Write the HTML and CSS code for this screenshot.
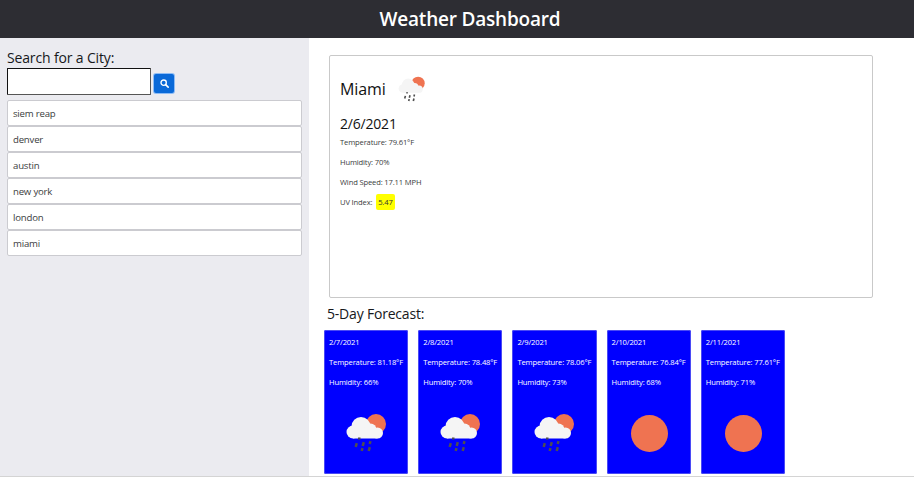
FILE: index.html
```html
<!DOCTYPE html>
<html lang="en">
<head>
<meta charset="utf-8">
<title>Weather Dashboard</title>
<link rel="stylesheet" href="styles.css">
</head>
<body>
<svg class="defs" width="0" height="0" aria-hidden="true">
  <defs>
    <g id="rain-cloud">
      <circle cx="35" cy="14" r="10" fill="#ef7351"/>
      <g fill="#f5f5f5">
        <circle cx="12" cy="22" r="6.500"/>
        <circle cx="20" cy="16.500" r="9.500"/>
        <circle cx="29.500" cy="19.500" r="6"/>
        <circle cx="36.500" cy="23" r="5.500"/>
        <rect x="12" y="20" width="24.500" height="8.500"/>
      </g>
      <g fill="#4f4f4f">
        <rect x="17" y="27.500" width="2.500" height="2"/>
        <rect x="14" y="33" width="2.500" height="4" transform="rotate(15 15 35)"/>
        <rect x="21" y="32" width="2.500" height="4" transform="rotate(15 22 34)"/>
        <rect x="28" y="31" width="2.500" height="3" transform="rotate(15 29 32)"/>
        <rect x="20" y="38" width="2.500" height="3" transform="rotate(15 21 39)"/>
        <rect x="27" y="37" width="2.500" height="4" transform="rotate(15 28 39)"/>
      </g>
    </g>
  </defs>
</svg>
<header class="topbar"><h1>Weather Dashboard</h1></header>
<div class="layout">
  <aside class="sidebar">
    <h2 class="search-title">Search for a City:</h2>
    <form class="search-row">
      <input class="search-input" type="text" aria-label="City">
      <button class="search-btn" type="button" aria-label="Search">
        <svg viewBox="0 0 16 16" width="9" height="9"><circle cx="6.500" cy="6.500" r="4.700" fill="none" stroke="#fff" stroke-width="2.400"/><path d="M10 10l4.500 4.500" stroke="#fff" stroke-width="2.800" stroke-linecap="round"/></svg>
      </button>
    </form>
    <ul class="history">
      <li>siem reap</li>
      <li>denver</li>
      <li>austin</li>
      <li>new york</li>
      <li>london</li>
      <li>miami</li>
    </ul>
  </aside>
  <main class="content">
    <section class="current">
      <div class="city-row">
        <h2 class="city">Miami</h2>
        <svg class="city-icon" viewBox="0 0 50 50" width="33" height="33"><use href="#rain-cloud"/></svg>
      </div>
      <h3 class="date">2/6/2021</h3>
      <p>Temperature: 79.61°F</p>
      <p>Humidity: 70%</p>
      <p>Wind Speed: 17.11 MPH</p>
      <p>UV Index: <span class="uv">5.47</span></p>
    </section>
    <h2 class="forecast-title">5-Day Forecast:</h2>
    <div class="forecast">
      <article class="day">
        <p>2/7/2021</p><p>Temperature: 81.18°F</p><p>Humidity: 66%</p>
        <svg class="day-icon" viewBox="0 0 50 50"><use href="#rain-cloud"/></svg>
      </article>
      <article class="day">
        <p>2/8/2021</p><p>Temperature: 78.48°F</p><p>Humidity: 70%</p>
        <svg class="day-icon" viewBox="0 0 50 50"><use href="#rain-cloud"/></svg>
      </article>
      <article class="day">
        <p>2/9/2021</p><p>Temperature: 78.06°F</p><p>Humidity: 73%</p>
        <svg class="day-icon" viewBox="0 0 50 50"><use href="#rain-cloud"/></svg>
      </article>
      <article class="day">
        <p>2/10/2021</p><p>Temperature: 76.84°F</p><p>Humidity: 68%</p>
        <div class="sun"></div>
      </article>
      <article class="day">
        <p>2/11/2021</p><p>Temperature: 77.61°F</p><p>Humidity: 71%</p>
        <div class="sun"></div>
      </article>
    </div>
  </main>
</div>
</body>
</html>
```
FILE: styles.css
```css
* { box-sizing: border-box; }
html, body { margin: 0; padding: 0; }
body {
  height: 477px;
  overflow: hidden;
  background: #fff;
  color: #212529;
  font-family: "Open Sans", "Noto Sans", sans-serif;
  border-bottom: 1px solid #d4d4d4;
}
.defs { display: block; height: 0; }
h1, h2, h3, p, ul { margin: 0; padding: 0; }

.topbar {
  height: 38px;
  background: #2d2d33;
  display: flex;
  align-items: center;
  justify-content: center;
  padding-left: 26px;
}
.topbar h1 { font-size: 19px; font-weight: 600; letter-spacing: -0.2px; color: #fff; line-height: 38px; }

.layout { display: flex; height: 438px; }
.sidebar {
  width: 309px;
  flex: none;
  background: #ebebf0;
  padding: 10px 7px 0;
}
.search-title { font-size: 14px; font-weight: 400; letter-spacing: -0.15px; color: #16181b; line-height: 20px; }
.search-row { display: flex; align-items: flex-end; gap: 3px; margin-bottom: 5px; }
.search-input {
  width: 144px;
  height: 27px;
  background: #fff;
  border: 1px solid;
  border-color: #111 #555 #555 #111;
  border-radius: 1px;
  padding: 0;
}
.search-btn {
  width: 20px;
  height: 19px;
  margin-bottom: 2px;
  background: #0a69d8;
  border: 0;
  border-radius: 2px;
  box-shadow: 0 0 0 1px #8ebcf5;
  display: flex;
  align-items: center;
  justify-content: center;
  padding: 0;
}
.history { list-style: none; }
.history li {
  height: 26px;
  background: #fff;
  border: 1px solid #cbcbd0;
  border-radius: 2px;
  padding-left: 5px;
  font-size: 9.600px;
  letter-spacing: -0.2px;
  line-height: 25px;
  color: #3a3d40;
}

.content { flex: 1; padding: 17px 41px 0 15px; }
.current {
  margin-left: 5px;
  height: 243px;
  border: 1px solid #c9c9c9;
  border-radius: 2px;
  padding: 18px 10px 0;
}
.city-row { display: flex; align-items: center; gap: 9px; height: 33px; }
.city { font-size: 16px; font-weight: 400; letter-spacing: -0.1px; color: #111; margin-bottom: 3px; }
.city-icon { display: block; }
.date { font-size: 14px; font-weight: 400; letter-spacing: -0.2px; color: #111; margin-top: 6px; line-height: 22px; }
.current p { font-size: 7.600px; letter-spacing: -0.15px; line-height: 12px; margin-top: 8px; color: #3a3d40; }
.current .date + p { margin-top: 1px; }
.uv { background: #ffff00; display: inline-block; padding: 2px; border-radius: 2px; margin: -3px 0 -1px 2px; color: #333; }

.forecast-title { font-size: 14px; font-weight: 400; letter-spacing: -0.2px; color: #16181b; line-height: 20px; margin: 6px 0 6px 3px; }
.forecast { display: flex; gap: 10px; }
.day {
  width: 84.200px;
  height: 144px;
  flex: none;
  background: #0000ff;
  border-radius: 2px;
  box-shadow: inset 0 0 0 1px #4a4af5;
  color: #fff;
  padding: 6px 5px 0;
  display: flex;
  flex-direction: column;
}
.day p { font-size: 7.600px; letter-spacing: -0.15px; line-height: 12px; margin-bottom: 8px; white-space: nowrap; }
.day-icon { width: 50px; height: 50px; margin: 14px 0 0 12px; display: block; flex: none; }
.sun { width: 37px; height: 37px; border-radius: 50%; background: #ef7351; margin: 19px 0 0 19px; }
```
